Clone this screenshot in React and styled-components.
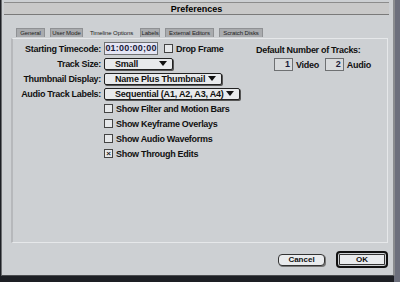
import React from 'react';
import styled, { createGlobalStyle } from 'styled-components';

const Global = createGlobalStyle`
  html, body { margin: 0; padding: 0; background: #1d1f24; }
  body { width: 400px; height: 282px; overflow: hidden; font-family: "Liberation Sans", Arial, sans-serif; }
`;

const Desk = styled.div`
  width: 400px;
  height: 282px;
  display: flex;
  background: linear-gradient(90deg, #1d1f24 0 394px, #6c6f7c 394px 400px);
`;

const Window = styled.div`
  width: 391px;
  height: 275px;
  margin-left: 1px;
  background: #cdd0d3;
  border-left: 1px solid #6b6d70;
  border-right: 2px solid #8a8c8f;
  border-bottom: 1px solid #4a4c4f;
  display: flex;
  flex-direction: column;
`;

const TitleBar = styled.div`
  height: 11px;
  margin: 2px 4px 0 2px;
  background: #c9c9c9;
  border-top: 1px solid #8c8c8c;
  border-bottom: 1px solid #7a7a7a;
  display: flex;
  justify-content: center;
  align-items: center;
  font-size: 9px;
  font-weight: bold;
  color: #000;
`;

const Tabs = styled.div`
  display: flex;
  align-items: flex-end;
  gap: 5px;
  margin: 12px 0 0 14px;
  height: 10px;
`;

const Tab = styled.div`
  box-sizing: border-box;
  height: 9px;
  font-size: 6px;
  line-height: 8px;
  letter-spacing: -0.1px;
  color: #222;
  background: ${p => (p.active ? 'transparent' : '#a9abae')};
  border: 1px solid ${p => (p.active ? 'transparent' : '#8f9194')};
  border-bottom: none;
  white-space: nowrap;
  width: ${p => p.w}px;
  text-align: center;
`;

const Panel = styled.div`
  margin: 1px 5px 0 9px;
  height: 200px;
  border: 1px solid #e6e8ea;
  border-left: 2px solid #b6b8bb;
  display: flex;
  padding: 3px 0 0 0;
`;

const Left = styled.div`
  width: 240px;
  display: flex;
  flex-direction: column;
`;

const Form = styled.div`
  display: grid;
  grid-template-columns: 88px auto;
  column-gap: 3px;
  row-gap: 2px;
  align-items: center;
`;

const Label = styled.div`
  text-align: ${p => (p.left ? 'left' : 'right')};
  margin-left: ${p => p.ml || 0}px;
  font-size: 9px;
  font-weight: bold;
  letter-spacing: -0.3px;
  color: #111;
  white-space: nowrap;
`;

const Row = styled.div`
  display: flex;
  align-items: center;
  height: 13px;
`;

const Field = styled.div`
  width: ${p => p.w}px;
  height: 11px;
  border: 1px solid #6e7072;
  background: ${p => (p.tinted ? '#e4e5f4' : '#d8dadc')};
  font-size: 9px;
  font-weight: bold;
  letter-spacing: ${p => (p.tinted ? '0.2px' : '0')};
  line-height: 11px;
  text-align: ${p => (p.right ? 'right' : 'center')};
  padding-right: ${p => (p.right ? 2 : 0)}px;
  box-sizing: content-box;
  color: #1a1a3a;
`;

const Popup = styled.div`
  width: ${p => p.w}px;
  height: 10px;
  border: 1px solid #222;
  border-radius: 2px;
  box-shadow: 1px 1px 0 #555;
  background: #e8eaec;
  display: flex;
  align-items: center;
  justify-content: space-between;
  padding: 0 5px 0 10px;
  font-size: 9px;
  font-weight: bold;
  letter-spacing: -0.2px;
  color: #111;
  white-space: nowrap;
  box-sizing: content-box;
`;

const Arrow = styled.span`
  width: 0;
  height: 0;
  border-left: 4px solid transparent;
  border-right: 4px solid transparent;
  border-top: 5px solid #111;
`;

const Box = styled.span`
  width: 7px;
  height: 7px;
  border: 1px solid #444;
  background: #e6e8ea;
  display: inline-flex;
  align-items: center;
  justify-content: center;
  font-size: 8px;
  line-height: 7px;
  color: #222;
  flex: none;
`;

const Check = styled.label`
  display: flex;
  align-items: center;
  gap: 3px;
  height: 13px;
  margin-bottom: ${p => (p.inline ? 0 : 2)}px;
  margin-left: ${p => (p.inline ? 6 : 0)}px;
  font-size: 9px;
  font-weight: bold;
  letter-spacing: -0.3px;
  color: #111;
  white-space: nowrap;
`;

const Checks = styled.div`
  margin: 2px 0 0 91px;
  display: flex;
  flex-direction: column;
`;

const Right = styled.div`
  margin: 3px 0 0 3px;
  display: flex;
  flex-direction: column;
  gap: 3px;
`;

const Tracks = styled.div`
  display: flex;
  gap: 6px;
  margin-left: 18px;
`;

const Footer = styled.div`
  display: flex;
  justify-content: flex-end;
  align-items: center;
  gap: 11px;
  padding: 8px 5px 0 0;
`;

const Button = styled.button`
  font-family: "Liberation Sans", Arial, sans-serif;
  font-size: 8px;
  font-weight: bold;
  color: #111;
  width: ${p => (p.primary ? 52 : 47)}px;
  height: ${p => (p.primary ? 17 : 12)}px;
  padding: 0;
  border-radius: 4px;
  background: #e9ebed;
  border: ${p => (p.primary ? '2px solid #111' : '1px solid #333')};
  box-shadow: ${p => (p.primary ? 'inset 0 0 0 1px #cdd0d3, inset 0 0 0 2px #333' : '1px 1px 0 #777')};
`;

export default function App() {
  return (
    <Desk>
      <Global />
      <Window>
        <TitleBar>Preferences</TitleBar>
        <Tabs>
          <Tab w={29}>General</Tab>
          <Tab w={33}>User Mode</Tab>
          <Tab active w={47}>Timeline Options</Tab>
          <Tab w={20}>Labels</Tab>
          <Tab w={49}>External Editors</Tab>
          <Tab w={44}>Scratch Disks</Tab>
        </Tabs>
        <Panel>
          <Left>
            <Form>
              <Label>Starting Timecode:</Label>
              <Row>
                <Field w={52} tinted>01:00:00;00</Field>
                <Check as="span" inline>
                  <Box />Drop Frame
                </Check>
              </Row>
              <Label>Track Size:</Label>
              <Row><Popup w={52}>Small<Arrow /></Popup></Row>
              <Label>Thumbnail Display:</Label>
              <Row><Popup w={101}>Name Plus Thumbnail<Arrow /></Popup></Row>
              <Label>Audio Track Labels:</Label>
              <Row><Popup w={119}>Sequential (A1, A2, A3, A4)<Arrow /></Popup></Row>
            </Form>
            <Checks>
              <Check><Box />Show Filter and Motion Bars</Check>
              <Check><Box />Show Keyframe Overlays</Check>
              <Check><Box />Show Audio Waveforms</Check>
              <Check><Box>×</Box>Show Through Edits</Check>
            </Checks>
          </Left>
          <Right>
            <Label left>Default Number of Tracks:</Label>
            <Tracks>
              <Row><Field w={15} right>1</Field><Label ml={3}>Video</Label></Row>
              <Row><Field w={15} right>2</Field><Label ml={3}>Audio</Label></Row>
            </Tracks>
          </Right>
        </Panel>
        <Footer>
          <Button>Cancel</Button>
          <Button primary>OK</Button>
        </Footer>
      </Window>
    </Desk>
  );
}
